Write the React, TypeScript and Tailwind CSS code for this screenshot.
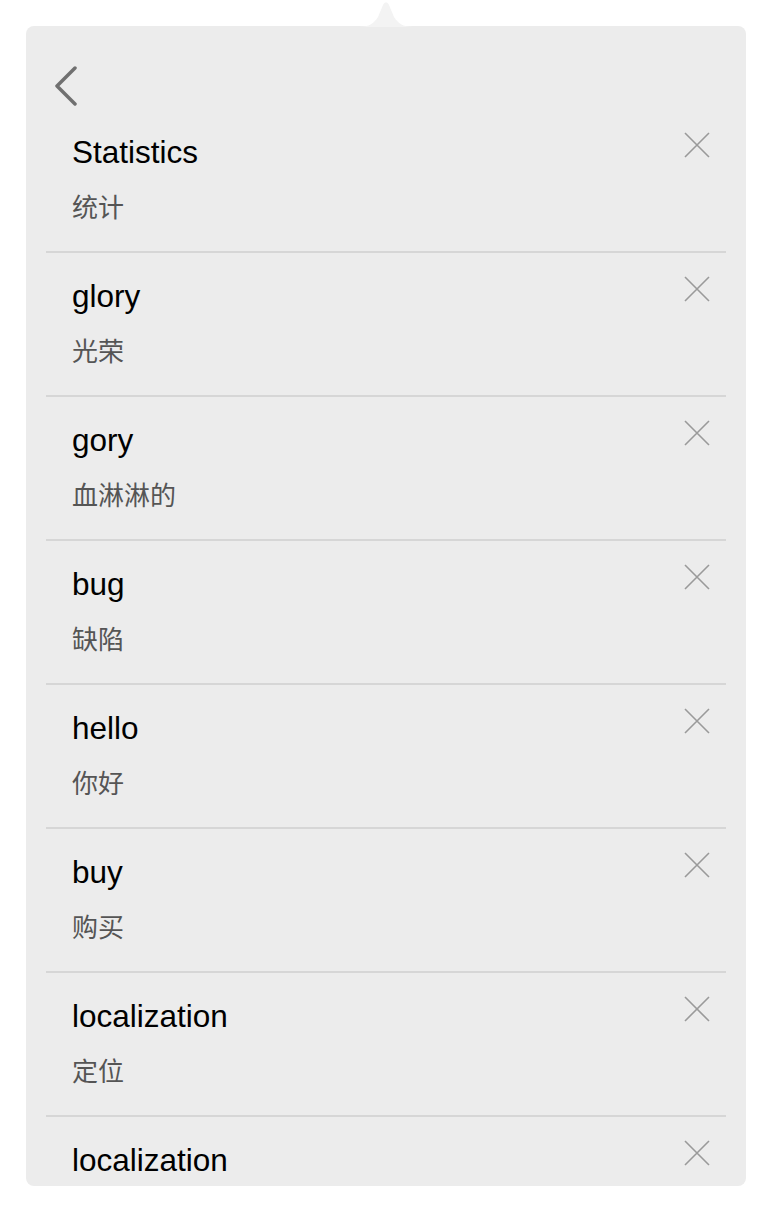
const words = [
  { en: "Statistics", zh: "统计" },
  { en: "glory", zh: "光荣" },
  { en: "gory", zh: "血淋淋的" },
  { en: "bug", zh: "缺陷" },
  { en: "hello", zh: "你好" },
  { en: "buy", zh: "购买" },
  { en: "localization", zh: "定位" },
  { en: "localization", zh: "" },
];

const CloseIcon = () => (
  <svg width="26" height="26" viewBox="0 0 26 26" fill="none">
    <path d="M1 1 L25 25 M25 1 L1 25" stroke="#9a9a9a" strokeWidth="1.6" />
  </svg>
);

const App = () => {
  return (
    <div className="min-h-screen bg-white pt-[26px] px-[26px] font-['Liberation_Sans','Noto_Sans_CJK_SC',sans-serif]">
      <div className="relative">
        {/* popover arrow */}
        <svg
          className="absolute left-[332px] top-[-25px]"
          width="56"
          height="26"
          viewBox="0 0 56 26"
        >
          <path d="M0 26 C12 26 16 22 20 16 L25 4 C26 2 27 1.5 28 1.5 C29 1.5 30 2 31 4 L36 16 C40 22 44 26 56 26 Z" fill="#f3f3f3" />
        </svg>
        <div className="bg-[#ececec] rounded-lg h-[1160px] overflow-hidden">
          <div className="h-[83px] pl-[28px] pt-[40px]">
            <svg width="26" height="40" viewBox="0 0 26 40" fill="none">
              <path
                d="M21 2 L3 20 L21 38"
                stroke="#707070"
                strokeWidth="3.5"
                strokeLinecap="round"
                strokeLinejoin="round"
              />
            </svg>
          </div>
          <div className="mx-5">
            {words.map((w, i) => (
              <div
                key={i}
                className="flex justify-between items-start h-[144px] border-b-2 border-[#d6d6d6] pl-[26px] pr-[16px] pt-6"
              >
                <div className="flex flex-col">
                  <div className="text-[31.5px] leading-[36px] mt-[1px] text-black">{w.en}</div>
                  {w.zh && (
                    <div className="text-[26px] leading-[32px] mt-[22px] text-[#555555]">{w.zh}</div>
                  )}
                </div>
                <button className="-mt-px">
                  <CloseIcon />
                </button>
              </div>
            ))}
          </div>
        </div>
      </div>
    </div>
  );
};

export default App;
